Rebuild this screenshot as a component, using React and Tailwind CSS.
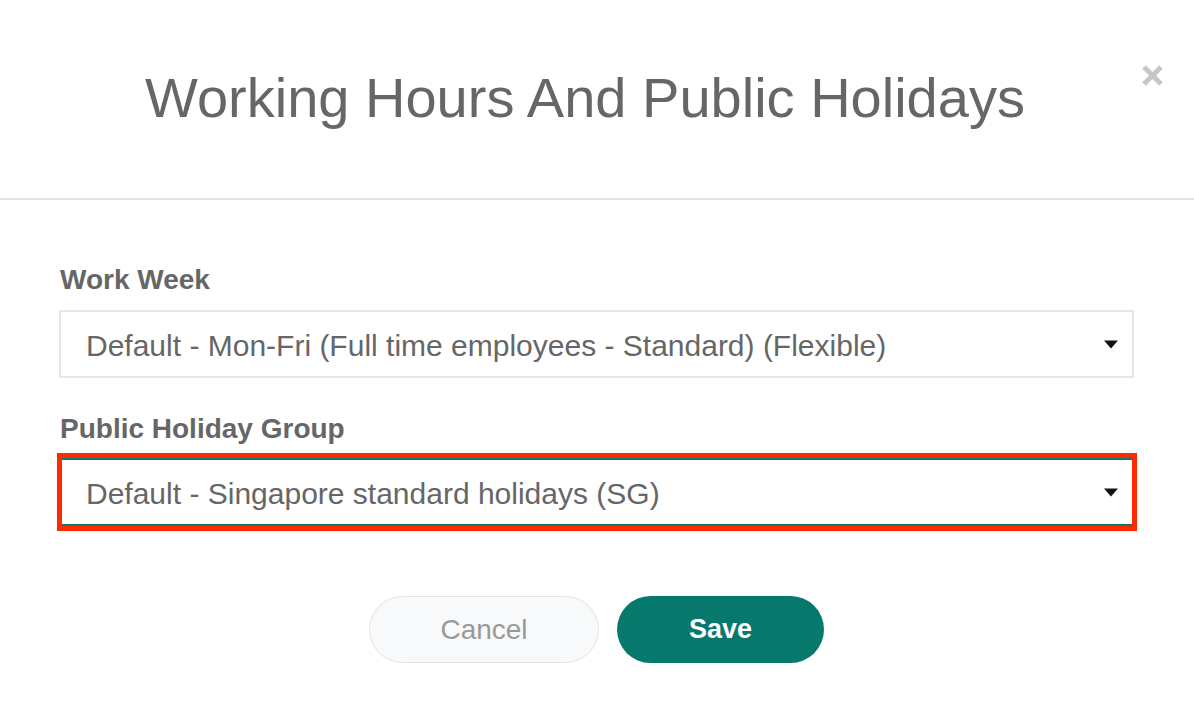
import { useState } from "react";

const workWeeks = [
  "Default - Mon-Fri (Full time employees - Standard) (Flexible)",
];

const holidayGroups = ["Default - Singapore standard holidays (SG)"];

function Caret() {
  return (
    <svg width="14" height="9" viewBox="0 0 14 9" className="shrink-0">
      <path d="M0 0.5 H14 L7 8.5 Z" fill="#111" />
    </svg>
  );
}

function SelectBox({ value, focused }) {
  return (
    <div
      className={`h-[68px] flex items-center justify-between pl-[25px] pr-[14px] bg-white border-2 ${
        focused ? "border-[#0b7a6d]" : "border-[#e6e6e6]"
      }`}
    >
      <span className="text-[30px] leading-none text-[#666] pt-[3px]">{value}</span>
      <Caret />
    </div>
  );
}

export default function App() {
  const [week] = useState(workWeeks[0]);
  const [group] = useState(holidayGroups[0]);

  return (
    <div
      className="w-[1194px] h-[722px] bg-white overflow-hidden"
      style={{ fontFamily: '"Liberation Sans", Arial, sans-serif' }}
    >
      {/* ===== HEADER ===== */}
      <div className="relative h-[200px] border-b-2 border-[#e5e5e5] flex items-center justify-center pr-[24px]">
        <h1 className="text-[56px] leading-none text-[#666] font-normal -mt-[2px]">
          Working Hours And Public Holidays
        </h1>
        <button className="absolute top-[64px] right-[30px]">
          <svg width="23" height="23" viewBox="0 0 23 23">
            <path
              d="M3 3 L20 20 M20 3 L3 20"
              stroke="#c6c6c6"
              strokeWidth="5"
              strokeLinecap="butt"
            />
          </svg>
        </button>
      </div>

      {/* ===== BODY ===== */}
      <div className="pl-[59px] pr-[60px] pt-[66px]">
        <label className="block pl-[1px] text-[28px] leading-[28px] font-bold text-[#666]">
          Work Week
        </label>
        <div className="mt-[16px]">
          <SelectBox value={week} />
        </div>

        <label className="block pl-[1px] mt-[37px] text-[28px] leading-[28px] font-bold text-[#666]">
          Public Holiday Group
        </label>
        <div className="relative mt-[15px]">
          <SelectBox value={group} focused />
          <div className="absolute -left-[2px] -right-[3px] -top-[5px] -bottom-[5px] border-[5px] border-[#ff2a00] pointer-events-none" />
        </div>

        <div className="flex justify-center gap-[18px] mt-[70px]">
          <button className="w-[230px] h-[67px] rounded-full bg-[#f8f9fb] border border-[#e3e3e3] text-[28px] text-[#999]">
            Cancel
          </button>
          <button className="w-[207px] h-[67px] rounded-full bg-[#06796c] text-[27px] font-bold text-white">
            Save
          </button>
        </div>
      </div>
    </div>
  );
}
